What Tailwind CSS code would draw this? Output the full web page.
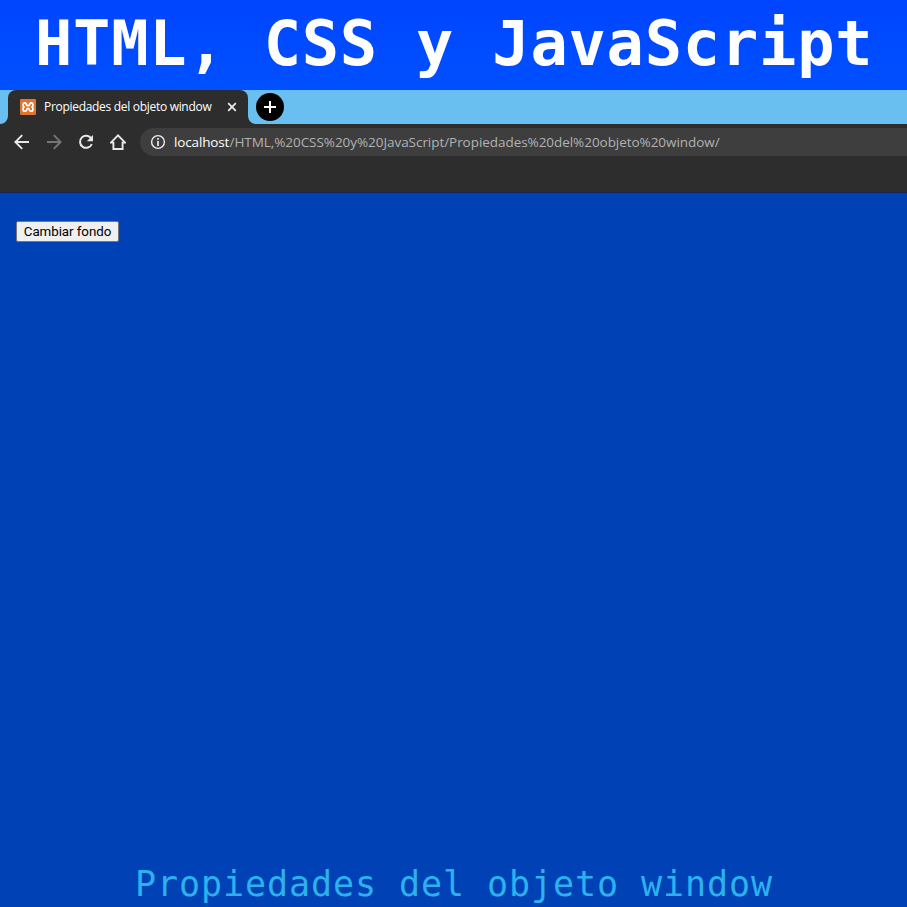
<!DOCTYPE html>
<html lang="es">
<head>
<meta charset="utf-8">
<title>Propiedades del objeto window</title>
<script src="https://cdn.jsdelivr.net/npm/@tailwindcss/browser@4"></script>
</head>
<body class="w-[907px] h-[907px] overflow-hidden flex flex-col bg-[#0042b6]">
<header class="h-[90px] shrink-0 bg-linear-to-b from-[#0045ff] to-[#0050ff] pl-[35px] pt-[8px]">
<h1 class="whitespace-pre font-bold text-white text-[62px] leading-[72px] tracking-[0.78px] font-['DejaVu_Sans_Mono',monospace]">HTML, CSS y JavaScript</h1>
</header>
<section class="h-[103px] shrink-0 bg-[#2d2d2d] border-b border-[#16284f] flex flex-col font-['Open_Sans',sans-serif]">
<div class="h-[34px] flex bg-[#2d2d2d]">
<div class="w-2 bg-[#69c0f0] rounded-br-[8px]"></div>
<div class="w-[240px] bg-[#69c0f0]">
<div class="h-[34px] bg-[#2d2d2d] rounded-t-[8px] pl-3 flex items-center">
<svg class="size-4 mr-2 shrink-0" viewBox="0 0 16 16"><rect width="16" height="16" rx="1" fill="#e0752f"/><path d="M6.2 3.9H4.8Q3.1 3.9 3.1 5.6V6.4Q3.1 8 4.8 8Q3.1 8 3.1 9.6V10.4Q3.1 12.1 4.8 12.1H5.4Q6.7 12.1 6.7 10.8Q6.7 9.4 8 9.4Q9.3 9.4 9.3 10.8Q9.3 12.1 10.6 12.1H11.2Q12.9 12.1 12.9 10.4V9.6Q12.9 8 11.2 8Q12.9 8 12.9 6.4V5.6Q12.9 3.9 11.2 3.9H9.8M6.1 3.9Q6.1 6.6 8 6.6Q9.9 6.6 9.9 3.9" fill="none" stroke="#fff" stroke-width="1.7"/></svg>
<span class="w-[180px] whitespace-nowrap text-[12px] leading-4 tracking-[-0.3px] text-white">Propiedades del objeto window</span>
<svg class="size-4 shrink-0" viewBox="0 0 16 16"><path d="M4.2 4.2l7.6 7.6M11.8 4.2l-7.6 7.6" stroke="#eee" stroke-width="1.7"/></svg>
</div>
</div>
<div class="flex-1 bg-[#69c0f0] rounded-bl-[8px] pl-2 flex items-center">
<svg class="size-7" viewBox="0 0 28 28"><circle cx="14" cy="14" r="14" fill="#000"/><path d="M8 14h12M14 8v12" stroke="#fff" stroke-width="2"/></svg>
</div>
</div>
<div class="h-9 flex items-center pl-[14px] gap-4">
<svg class="size-4" viewBox="0 0 16 16" fill="none" stroke="#e8e8e8" stroke-width="1.9"><path d="M15 8H2M8.2 1.2L1.4 8l6.8 6.8"/></svg>
<svg class="size-4" viewBox="0 0 16 16" fill="none" stroke="#767676" stroke-width="1.9"><path d="M1 8h13M7.8 1.2L14.6 8l-6.8 6.8"/></svg>
<svg class="size-4" viewBox="0 0 16 16"><path d="M13.3 4.5A6.1 6.1 0 1 0 13.8 10" fill="none" stroke="#e8e8e8" stroke-width="2"/><path d="M15 1v6.2H8.8z" fill="#e8e8e8"/></svg>
<svg class="size-4" viewBox="0 0 16 16" fill="none" stroke="#e8e8e8" stroke-width="1.9"><path d="M.9 8.6H3.4V15H12.6V8.6H15.1L8 1.4Z"/></svg>
<div class="-ml-[2px] flex-1 h-7 rounded-l-full bg-[#3e3e3e] flex items-center pl-[10px]">
<svg class="size-4 mr-2 shrink-0" viewBox="0 0 16 16"><circle cx="8" cy="8" r="6.4" fill="none" stroke="#eee" stroke-width="1.4"/><path d="M8 7.1V12M8 4.1V5.8" stroke="#eee" stroke-width="1.7"/></svg>
<span class="w-[55.5px] whitespace-nowrap text-[13.5px] leading-5 tracking-[-0.15px] text-white">localhost</span><span class="whitespace-nowrap text-[13.5px] leading-5 tracking-[-0.05px] text-[#b2b2b2]">/HTML,%20CSS%20y%20JavaScript/Propiedades%20del%20objeto%20window/</span>
</div>
</div>
</section>
<main class="flex-1 flex flex-col justify-between">
<div class="pt-7 pl-4"><button class="block w-[103px] h-[21px] bg-[#efefef] border border-[#767676] rounded-[2px] text-[13.33px] leading-[19px] tracking-[-0.05px] text-black whitespace-nowrap font-['Roboto',sans-serif]">Cambiar fondo</button></div>
<p class="h-[46px] pl-[135px] whitespace-pre text-[#2cb1ed] text-[35px] leading-[46px] tracking-[0.93px] font-['DejaVu_Sans_Mono',monospace]">Propiedades del objeto window</p>
</main>
</body>
</html>
